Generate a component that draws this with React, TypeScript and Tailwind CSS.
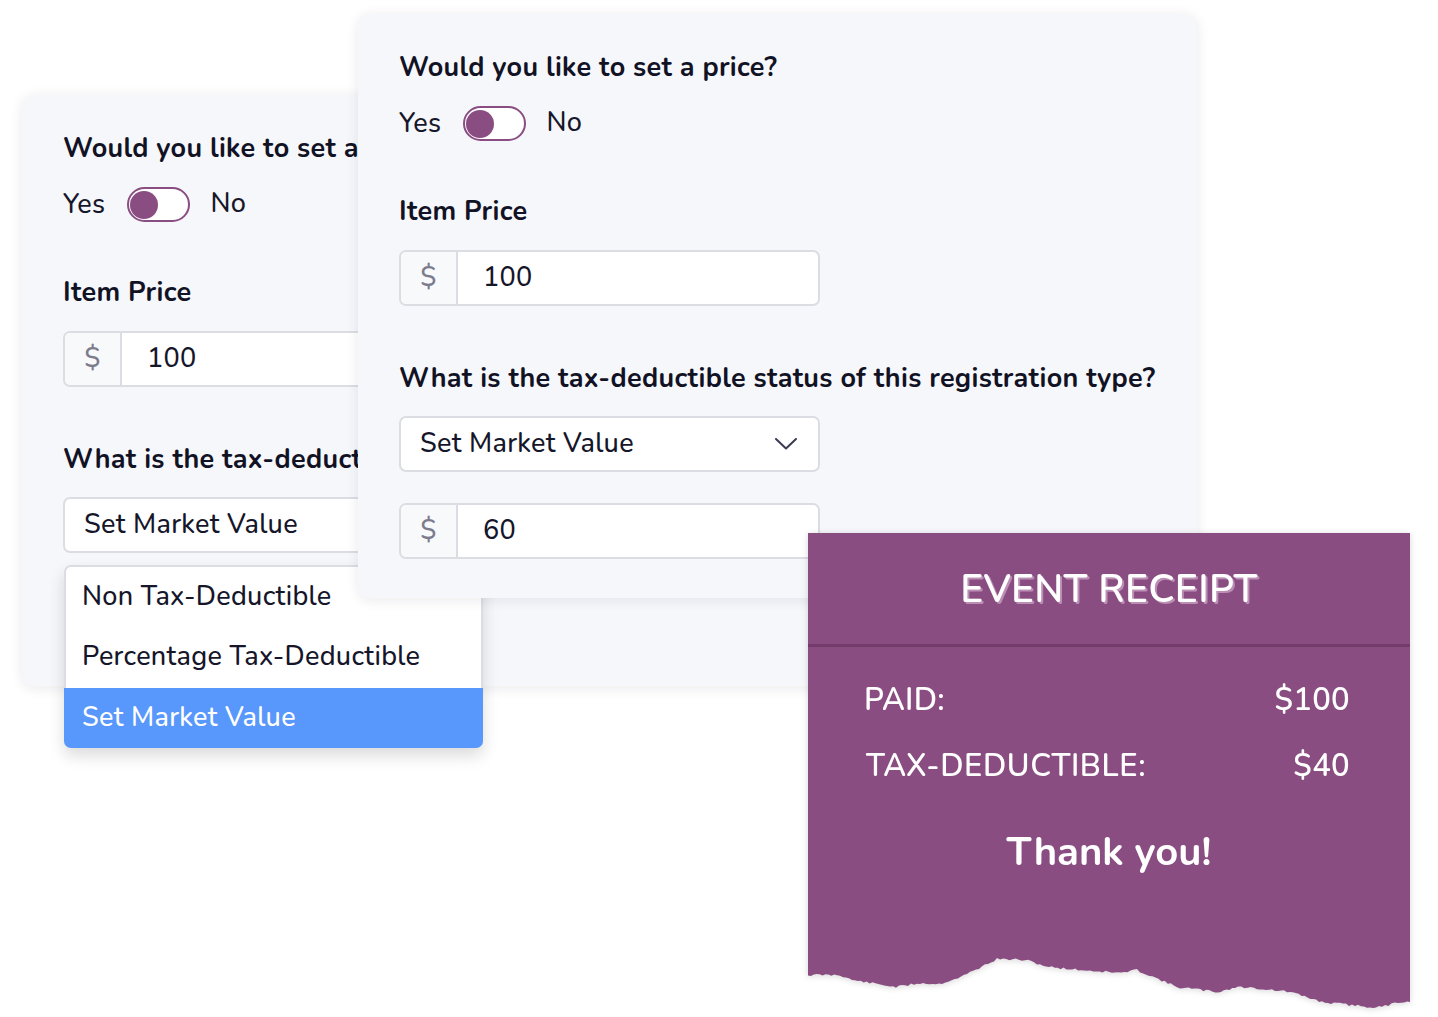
import React from "react";

const FONT = { fontFamily: '"Nunito", "Lato", "Open Sans", sans-serif' };

const base: [number, number][] = [
  [0, 19], [32, 19], [44, 24], [88, 31], [112, 27], [131, 28], [153, 21], [189, 3],
  [217, 4], [241, 11], [273, 14], [313, 17], [329, 14], [369, 31], [410, 36], [430, 31],
  [446, 32], [482, 36], [514, 46], [562, 51], [574, 51], [590, 46], [602, 46],
];

function tornPath(): string {
  let seed = 11;
  const rnd = () => {
    seed = (seed * 9301 + 49297) % 233280;
    return seed / 233280;
  };
  const pts: [number, number][] = [];
  for (let i = 0; i < base.length - 1; i++) {
    const [x0, y0] = base[i];
    const [x1, y1] = base[i + 1];
    const steps = Math.max(1, Math.round((x1 - x0) / 3));
    for (let s = 0; s < steps; s++) {
      const t = s / steps;
      pts.push([x0 + (x1 - x0) * t, y0 + (y1 - y0) * t + (rnd() - 0.5) * 2.4]);
    }
  }
  pts.push(base[base.length - 1]);
  return (
    "M0,-2 " +
    pts.map((p) => `L${p[0].toFixed(1)},${p[1].toFixed(1)}`).join(" ") +
    " L602,-2 Z"
  );
}

const TORN = tornPath();

function Toggle() {
  return (
    <div className="flex items-center h-[39px] text-[27px] tracking-[0.3px] font-medium text-[#17172b]">
      <span className="mt-[2px]">Yes</span>
      <div className="ml-[22px] w-[63px] h-[35px] rounded-full border-2 border-[#8a4d82] bg-white flex items-center px-[1px]">
        <div className="w-[28px] h-[28px] rounded-full bg-[#8a4d82]" />
      </div>
      <span className="ml-[20px] -mt-[1px]">No</span>
    </div>
  );
}

function PriceInput({ value }: { value: string }) {
  return (
    <div className="flex w-[421px] h-[56px] rounded-[7px] border-2 border-[#dcdde2] bg-white overflow-hidden text-[27px] tracking-[0.3px] font-medium">
      <div className="w-[57px] flex items-center justify-center bg-[#f8f9fb] border-r-2 border-[#dcdde2] text-[#7c7c8e]">
        $
      </div>
      <div className="flex items-center pl-[25px] text-[#16162a]">{value}</div>
    </div>
  );
}

function Select() {
  return (
    <div className="flex w-[421px] h-[56px] items-center justify-between rounded-[7px] border-2 border-[#dcdde2] bg-white pl-[19px] pr-[21px] text-[27px] tracking-[0.3px] font-medium text-[#16162a]">
      <span>Set Market Value</span>
      <svg width="22" height="12" viewBox="0 0 22 12">
        <polyline points="1,1 11,10.5 21,1" fill="none" stroke="#3b3b52" strokeWidth="2" strokeLinecap="round" strokeLinejoin="round" />
      </svg>
    </div>
  );
}

function DropdownList() {
  return (
    <div className="mt-[12px] -mb-[62px] ml-[1px] w-[419px] rounded-[7px] border-2 border-b-0 border-[#dcdde2] bg-white text-[27px] tracking-[0.3px] font-medium text-[#16162a] shadow-[0_8px_16px_rgba(0,0,0,0.14)]">
      <div className="h-[60px] flex items-center pl-[16px]">Non Tax-Deductible</div>
      <div className="h-[61px] flex items-center pl-[16px]">Percentage Tax-Deductible</div>
      <div className="h-[60px] -mx-[2px] flex items-center pl-[18px] bg-[#5897fb] text-white rounded-b-[7px]">
        Set Market Value
      </div>
    </div>
  );
}

function FormCard({ back }: { back?: boolean }) {
  return (
    <div
      className={`flex flex-col items-start w-[839px] rounded-[12px] bg-[#f6f7fb] shadow-[0_2px_14px_rgba(20,20,60,0.09)] pl-[41px] pt-[34px] ${back ? "pb-0" : "pb-[39px]"}`}
    >
      <h2 className="text-[27px] tracking-[0.3px] leading-[39px] font-bold text-[#121225]">Would you like to set a price?</h2>
      <div className="mt-[17px]">
        <Toggle />
      </div>
      <h3 className="mt-[49px] text-[27px] tracking-[0.3px] leading-[39px] font-bold text-[#121225]">Item Price</h3>
      <div className="mt-[19px]">
        <PriceInput value="100" />
      </div>
      <h3 className="mt-[53px] text-[27px] tracking-[0.3px] leading-[39px] font-bold text-[#121225]">
        What is the tax-deductible status of this registration type?
      </h3>
      <div className="mt-[18px]">
        <Select />
      </div>
      {back ? (
        <DropdownList />
      ) : (
        <div className="mt-[31px]">
          <PriceInput value="60" />
        </div>
      )}
    </div>
  );
}

function Receipt() {
  return (
    <div className="w-[602px] drop-shadow-[0_1px_3px_rgba(0,0,0,0.16)] text-white">
      <div className="h-[423px] bg-[#8a4d82] flex flex-col">
        <div className="h-[111px] pt-[4px] flex items-center justify-center text-[39px] font-semibold tracking-[0.3px] [text-shadow:2px_2px_0_rgba(214,176,208,0.65)]">
          EVENT RECEIPT
        </div>
        <div className="h-[3px] bg-[#733c6b]" />
        <div className="pl-[56px] pr-[60px] pt-[33px] text-[31px] font-semibold tracking-[0.3px]">
          <div className="flex justify-between h-[40px] items-center">
            <span>PAID:</span>
            <span>$100</span>
          </div>
          <div className="flex justify-between h-[40px] items-center mt-[26px]">
            <span className="pl-[2px] tracking-[0.6px]">TAX-DEDUCTIBLE:</span>
            <span>$40</span>
          </div>
        </div>
        <div className="mt-[41px] text-center text-[40px] font-bold leading-[50px]">Thank you!</div>
      </div>
      <svg width="602" height="56" viewBox="0 0 602 56" className="block">
        <path d={TORN} fill="#8a4d82" />
      </svg>
    </div>
  );
}

export default function App() {
  return (
    <div className="relative w-[1438px] h-[1017px] overflow-hidden bg-white" style={FONT}>
      <div className="absolute left-[22px] top-[95px]">
        <FormCard back />
      </div>
      <div className="absolute left-[358px] top-[14px]">
        <FormCard />
      </div>
      <div className="absolute left-[808px] top-[533px]">
        <Receipt />
      </div>
    </div>
  );
}
